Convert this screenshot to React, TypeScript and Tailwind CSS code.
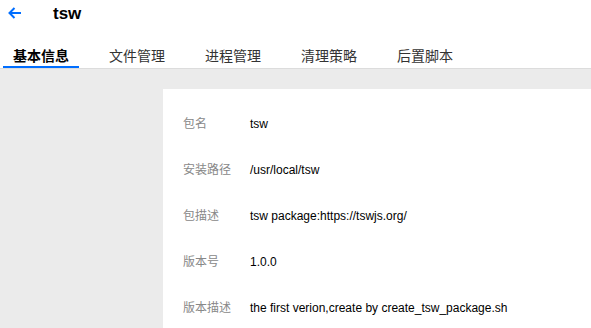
import React from "react";

const tabs = ["基本信息", "文件管理", "进程管理", "清理策略", "后置脚本"];
const rows: [string, string][] = [
  ["包名", "tsw"],
  ["安装路径", "/usr/local/tsw"],
  ["包描述", "tsw package:https://tswjs.org/"],
  ["版本号", "1.0.0"],
  ["版本描述", "the first verion,create by create_tsw_package.sh"],
];

export default function App() {
  return (
    <div
      className="w-[591px] h-[328px] overflow-hidden flex flex-col bg-white"
      style={{ fontFamily: '"Liberation Sans", Arial, "Noto Sans CJK SC", sans-serif' }}
    >
      <div className="bg-white">
        <div className="h-[26px] flex items-center">
          <svg className="ml-[8px] mt-[-1px]" width="13" height="12" viewBox="0 0 13 12" fill="none">
            <path d="M13 6H1.6M6.5 1L1.5 6L6.5 11" stroke="#006eff" strokeWidth="2" />
          </svg>
          <span className="ml-[32px] text-[17px] font-bold text-black leading-none">tsw</span>
        </div>
        <div className="pt-[20px] border-b border-[#dcdcdc] flex gap-[20px] pl-[3px]">
          {tabs.map((t, i) => (
            <div
              key={t}
              className={
                i === 0
                  ? "px-[10px] text-[14px] leading-[20px] font-bold text-black border-b-2 border-[#006eff]"
                  : "px-[10px] text-[14px] leading-[20px] text-[#333] border-b-2 border-transparent"
              }
            >
              {t}
            </div>
          ))}
        </div>
      </div>
      <div className="flex-1 bg-[#ebebeb] pl-[163px] pt-[20px] flex">
        <div className="flex-1 bg-white pt-[12px] pl-[20px]">
          {rows.map(([k, v]) => (
            <div key={k} className="h-[46px] flex items-center text-[12px]">
              <div className="w-[67px] text-[#888]">{k}</div>
              <div className="text-black">{v}</div>
            </div>
          ))}
        </div>
      </div>
    </div>
  );
}
